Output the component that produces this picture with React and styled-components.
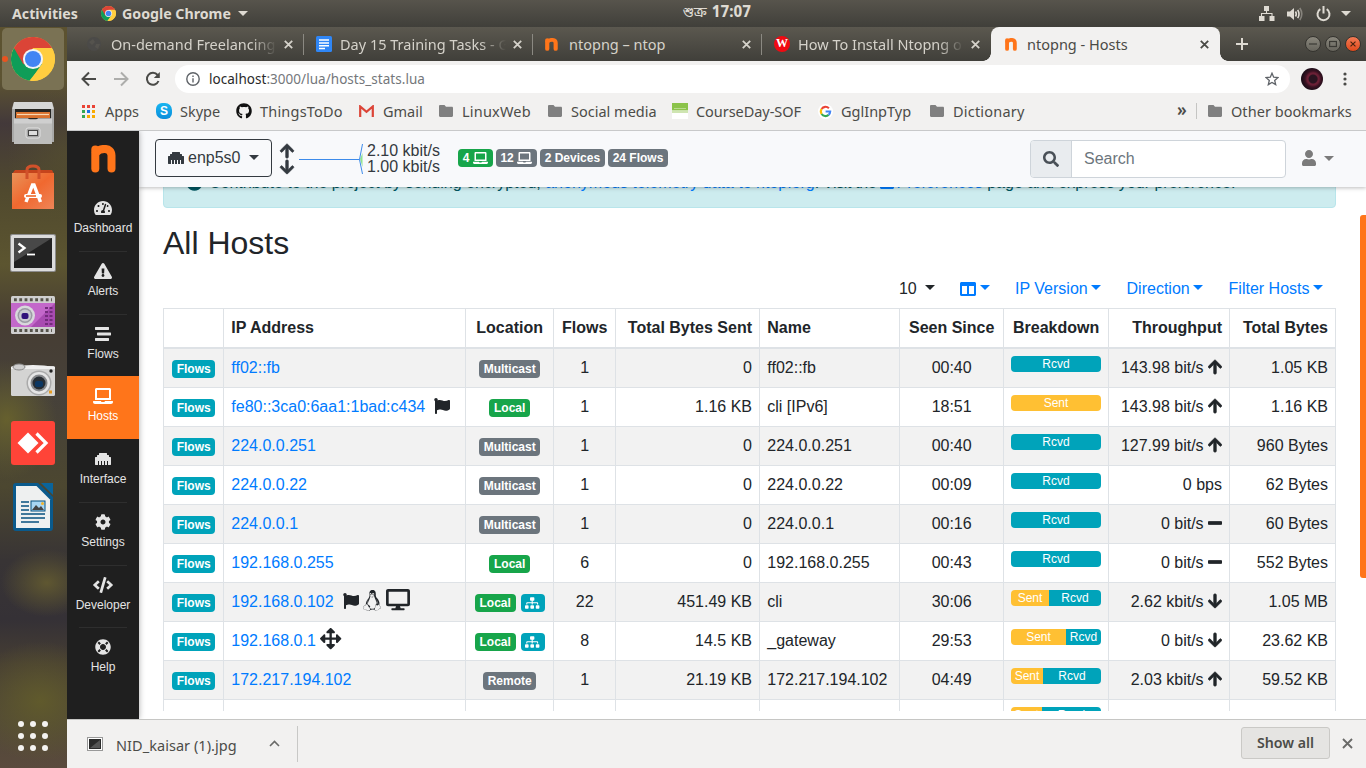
import React from "react";
import styled, { createGlobalStyle, css } from "styled-components";
import {
  FaTachometerAlt, FaExclamationTriangle, FaStream, FaLaptop, FaEthernet, FaCog, FaCode, FaLifeRing,
  FaSitemap, FaFlag, FaDesktop, FaArrowsAlt, FaArrowUp, FaArrowDown, FaMinus, FaSearch, FaUser,
  FaColumns, FaLinux, FaInfoCircle, FaGithub, FaSquare,
} from "react-icons/fa";

const UI = `"Noto Sans", "Open Sans", sans-serif`;
const WEB = `"Liberation Sans", Arial, sans-serif`;

const Global = createGlobalStyle`
  *, *::before, *::after { box-sizing: border-box; }
  html, body { margin: 0; padding: 0; }
  body { width: 1366px; height: 768px; overflow: hidden; }
  svg { display: block; flex: none; }
`;

const Desktop = styled.div`
  width: 1366px; height: 768px; display: grid; overflow: hidden;
  grid-template: 27px 741px / 67px 1299px;
  font-family: ${UI};
`;

/* ---------- GNOME top bar ---------- */
const TopBar = styled.header`
  grid-column: 1 / 3; display: grid; grid-template-columns: minmax(0, 1fr) 136px minmax(0, 1fr); align-items: center;
  background: linear-gradient(#57544c, #403f3a); color: #dedad2;
  font-size: 14.2px; font-weight: 700; line-height: 27px; white-space: nowrap;
`;
const TopGroup = styled.div`
  display: flex; align-items: center; height: 27px; padding: ${(p) => p.$pad};
  justify-content: ${(p) => p.$justify || "flex-start"};
`;
const TopLabel = styled.span`
  width: ${(p) => p.$w}px; margin: 0 ${(p) => p.$gap || 0}px 0 ${(p) => p.$left || 0}px;
`;
const Clock = styled.span`
  padding-left: 67.500px; line-height: 27px; height: 27px; font-family: "Noto Sans Bengali", "Liberation Sans", sans-serif; font-size: 15px;
`;
const Weekday = styled.span`font-weight: 400; margin-right: 1px;`;
const Triangle = styled.i`
  width: 0; height: 0; border: 5px solid transparent; border-top-color: currentColor; border-bottom: 0;
`;

/* ---------- Dock ---------- */
const Dock = styled.nav`
  display: flex; flex-direction: column; align-items: center; padding: 1px 2px 0 0; height: 741px;
  background:
    radial-gradient(ellipse 60px 70px at 100% 17%, #57512e99, transparent),
    radial-gradient(ellipse 50px 60px at 10% 53%, #66602e, transparent),
    radial-gradient(ellipse 46px 34px at 70% 75%, #5f5731, transparent),
    radial-gradient(ellipse 70px 60px at 60% 91%, #605a2c, transparent),
    linear-gradient(#5c5230 0, #5d5432 7%, #43393a 13%, #50492e 22%, #5c5530 32%, #463d33 40%, #46413a 50%, #4c4730 62%, #383435 72%, #353136 80%, #463e33 86%, #514838 94%, #5a4a3d 100%);
`;
const DockItem = styled.div`
  width: 62px; height: 62px; margin-bottom: 2px; border-radius: 5px; position: relative;
  display: flex; align-items: center; justify-content: center; flex: none;
  padding-top: ${(p) => p.$drop || 0}px;
  background: ${(p) => (p.$active ? "#7a7254" : "transparent")};
  &:last-child { margin: auto 0 1px; }
`;
const RunDot = styled.i`
  position: absolute; left: 0; top: 28px; width: 6px; height: 6px; border-radius: 50%; background: #e95420;
`;

/* ---------- Browser ---------- */
const Browser = styled.main`
  display: grid; grid-template-rows: 34px 35px 35px 588px 49px; width: 1299px; height: 741px; min-width: 0;
`;
const TabStrip = styled.div`
  display: flex; padding-left: 8px; background: linear-gradient(#5b584f, #403f3a); height: 34px;
`;
const TabBox = styled.div`
  width: 229px; height: 34px; display: flex; align-items: center; padding: 0 11px 0 12px; position: relative;
  color: ${(p) => (p.$active ? "#4a4a46" : "#d5d2ca")};
  ${(p) => p.$active ? css`
    background: #f2f1f0; border-radius: 8px 8px 0 0; padding-left: 14px;
    &::before, &::after { content: ""; position: absolute; bottom: 0; width: 8px; height: 8px; }
    &::before { left: -8px; background: radial-gradient(circle at 0 0, transparent 7.5px, #f2f1f0 8px); }
    &::after { right: -8px; background: radial-gradient(circle at 100% 0, transparent 7.5px, #f2f1f0 8px); }
  ` : p.$sep && css`
    &::after { content: ""; position: absolute; right: 0; top: 7px; width: 1px; height: 21px; background: #8b8982; }
  `}
`;
const TabIcon = styled.span`width: ${(p) => (p.$active ? 22 : 24)}px; height: 16px; display: flex; align-items: center;`;
const TabTitle = styled.span`
  width: 170px; white-space: nowrap; font-size: 14.5px; line-height: 22px; margin-top: -1px;
  ${(p) => p.$fade && css`mask-image: linear-gradient(90deg, #000 140px, transparent 166px);`}
`;
const TabClose = styled.span`margin-left: auto;`;
const StripEnd = styled.div`
  flex: 1; display: flex; align-items: center; padding: 0 5px 0 16px; gap: 4px; color: #dedad2;
  & > :nth-child(2) { margin-left: auto; }
`;
const WinBtn = styled.span`
  width: 16px; height: 16px; border-radius: 50%; display: grid; place-items: center; border: 1px solid #35342f;
  background: ${(p) => (p.$close ? "linear-gradient(#f37b55, #df4a1c)" : "linear-gradient(#8a877d, #66645c)")};
`;

const Toolbar = styled.div`
  background: #f2f1f0; display: flex; align-items: center; padding: 1px 16px 0 14px; color: #4c4c48;
`;
const NavIcon = styled.span`width: 16px; margin-right: 16px;`;
const UrlPill = styled.div`
  width: 1115px; height: 28px; border-radius: 14px; background: #fff; margin-left: -2px;
  display: flex; align-items: center; padding: 0 11px 0 11px; color: #5f6368;
`;
const Url = styled.span`
  flex: 1; margin-left: 9px; font-size: 13.5px; color: #74777b; letter-spacing: 0.04px; line-height: 20px;
  b { font-weight: 400; color: #2a2a2a; }
`;
const Avatar = styled.span`
  width: 22px; height: 22px; margin: 0 20px 0 11px; border-radius: 50%;
  background: radial-gradient(circle at 55% 50%, #2a1420 0 4px, #6b2036 5px 6px, #3a1222 8px, #1d0d18 11px);
`;

const Bookmarks = styled.div`
  background: #f2f1f0; border-bottom: 1px solid #c8c9ca; display: flex; align-items: center; padding: 0 14px 4px 15px;
  color: #4c4c48; height: 35px;
`;
const Bookmark = styled.div`
  display: flex; align-items: center; width: ${(p) => p.$w}px; flex: none; white-space: nowrap;
  font-size: 14.5px; line-height: 20px;
`;
const BookmarkLabel = styled.span`margin-top: -1px; letter-spacing: ${(p) => p.$ls || 0}px;`;
const BookmarkIcon = styled.span`width: ${(p) => p.$w || 24}px; display: flex; align-items: center;`;
const More = styled.span`margin: -2px 0 0 auto; width: 19px; font-size: 17px; font-weight: 600; line-height: 20px;`;
const BarSep = styled.i`width: 1px; height: 16px; background: #c5c5c3; margin-right: 11px;`;

/* ---------- Web page ---------- */
const Page = styled.section`
  display: grid; grid-template-columns: 72px 1fr; height: 588px; background: #fff; font-family: ${WEB};
  font-size: 16px; line-height: 24px; color: #212529; overflow: hidden; position: relative;
`;
const Sidebar = styled.aside`
  background: #1f1f1f; box-shadow: 0 0 6px #0005; display: flex; flex-direction: column; position: relative; z-index: 3;
`;
const Brand = styled.div`height: 57px; display: flex; justify-content: center; padding-top: 14px; flex: none;`;
const SideItem = styled.div`
  height: 62.75px; flex: none; display: flex; flex-direction: column; align-items: center; padding-top: 12px; position: relative;
  font-size: 12px; line-height: 18px; color: ${(p) => (p.$active ? "#fff" : "#e4e4e4")};
  background: ${(p) => (p.$active ? "#ff751a" : "transparent")};
  svg { height: 16px; width: 20px; margin-bottom: 3px; }
  & + &::before { content: ""; position: absolute; top: 0; left: 12px; right: 12px; height: 1px; background: ${(p) => (p.$active ? "transparent" : "#2e2e2e")}; }
`;
const Content = styled.div`display: flex; flex-direction: column; min-width: 0;`;
const Navbar = styled.div`
  height: 56px; flex: none; background: #f8f9fb; box-shadow: 0 1px 4px #0004; position: relative; z-index: 2;
  display: flex; align-items: center; padding: 0 31px 0 16px;
`;
const IfaceButton = styled.button`
  height: 38px; width: 117px; border: 1px solid #343a40; border-radius: 4px; background: transparent; color: #343a40;
  font: 16px/24px ${WEB}; display: flex; align-items: center; padding: 0 12px; margin: -3px 8px 0 0;
  svg { margin-right: 4px; }
`;
const Caret = styled.i`
  width: 0; height: 0; border: 5px solid transparent; border-top-color: currentColor; border-bottom: 0;
  display: inline-block; margin-left: ${(p) => p.$gap ?? 3.5}px;
`;
const Arrows = styled.div`display: flex; flex-direction: column; width: 19px; color: #343a40; margin: -1px 1px 0 -1px;`;
const Rates = styled.div`line-height: 16px; width: 91px; color: #343a40; margin: -1px 0 0 4px;`;
const Badge = styled.span`
  display: inline-block; padding: 3px 4.8px; border-radius: 4px; font-size: 12px; font-weight: 700; line-height: 12px; color: #fff;
  background: ${(p) => ({ green: "#17a54a", teal: "#00a3ba", grey: "#6c757d" })[p.$tone]};
  white-space: nowrap; vertical-align: baseline; height: 18px;
  svg { display: inline-block; width: 15px; height: 12px; vertical-align: top; }
`;
const NavBadges = styled.div`display: flex; gap: 3px; margin-top: -2px;`;
const SearchGroup = styled.div`
  margin: 0 16px 0 auto; width: 256px; height: 38px; border: 1px solid #ced4da; border-radius: 4px; background: #fff;
  display: flex; align-items: center; overflow: hidden; color: #6c757d;
`;
const SearchAddon = styled.span`
  width: 41px; height: 36px; background: #e9ecef; border-right: 1px solid #ced4da; display: grid; place-items: center;
  color: #495057; margin-right: 12px;
`;
const UserMenu = styled.div`
  display: flex; align-items: center; color: #7b7b7b; margin-top: -2px; width: 33px;
  svg { margin-left: -1px; }
`;

const Scroll = styled.div`height: 524px; overflow: hidden; padding: 0 30px 0 24px; flex: none;`;
const Alert = styled.div`
  height: 50px; margin-top: -29px; padding: 12px 20px; border: 1px solid #b8e5eb; border-radius: 4px;
  background: #cdecef; color: #00555f; white-space: nowrap; display: flex;
  svg { display: inline-block; vertical-align: -2px; width: 14px; margin-right: 2px; }
  & > svg { width: 17px; margin: 3px 6px 0 2px; }
  a { color: #007bff; }
`;
const Sentence = styled.span`letter-spacing: ${(p) => p.$ls || 0}px;`;
const Title = styled.h2`font-size: 32px; line-height: 38px; font-weight: 400; margin: 16px 0 15px; height: 38px;`;
const Controls = styled.div`
  display: flex; justify-content: flex-end; height: 24px; margin-bottom: 7px; padding-right: 13px; color: #007bff;
`;
const Control = styled.span`
  display: flex; align-items: center; margin-left: 25.4px; color: ${(p) => (p.$dark ? "#212529" : "inherit")};
  i { margin-top: -3px; }
`;
const Table = styled.table`
  border-collapse: separate; border-spacing: 0; table-layout: fixed; width: 1173px; border-left: 1px solid #dee2e6;
  border-top: 1px solid #dee2e6;
  tbody tr:nth-child(odd) { background: #f2f2f2; }
`;
const cell = css`
  padding: 7px 7px 7px 7.3px; border-right: 1px solid #dee2e6; height: 39px; white-space: nowrap;
  text-align: ${(p) => p.$align || "left"}; vertical-align: top; line-height: 24px;
`;
const Th = styled.th`${cell} border-bottom: 2px solid #dee2e6; height: 40px; font-weight: 700;`;
const Td = styled.td`
  ${cell} border-bottom: 1px solid #dee2e6;
  ${(p) => p.$bar && css`padding-left: 7px;`}
  a { color: #007bff; }
`;
const Bar = styled.div`
  display: flex; height: 16px; border-radius: 4px; overflow: hidden; font-size: 12px; line-height: 16px; text-align: center; color: #fff;
`;
const BarPart = styled.span`flex: none; overflow: hidden; background: ${(p) => (p.$sent ? "#ffc033" : "#00a3ba")};`;
const Extras = styled.span`
  display: inline-flex; align-items: center; height: ${(p) => p.$h || 23}px; vertical-align: top;
  svg { margin-left: ${(p) => p.$gap || 0}px; width: ${(p) => p.$w}px; }
`;
const LocationBadges = styled.span`
  display: inline-flex; gap: 5px; vertical-align: top; margin-top: 4px;
  svg { width: 14.4px; }
`;
const ScrollThumb = styled.i`
  position: absolute; right: 0; top: 84px; width: 6px; height: 363px; border-radius: 3px 0 0 3px; background: #ff751a; z-index: 4;
`;

/* ---------- Download shelf ---------- */
const Shelf = styled.footer`
  border-top: 1px solid #c6c6c4; background: #f2f1f0; display: flex; align-items: center; padding: 0 13px 1px 20px;
  color: #4c4c48; font-size: 14.5px;
`;
const FileName = styled.span`width: 153px; margin-left: 13px; padding-top: 3px; white-space: nowrap; letter-spacing: 0.05px;`;
const ShelfSep = styled.i`width: 1px; height: 36px; background: #c8c8c6; margin-left: 17px;`;
const ShowAll = styled.button`
  margin: 0 12px 1px auto; width: 89px; height: 32px; border: 1px solid #cac9c6; border-radius: 3px; background: #e5e4e2;
  font: 600 14.2px/20px ${UI}; color: #4c4c48; padding: 0;
`;

/* ---------- Drawings ---------- */
const ChromeLogo = ({ size }) => (
  <svg width={size} height={size} viewBox="0 0 48 48">
    <circle cx="24" cy="24" r="24" fill="#ffcd40" />
    <path d="M24 24 3.2 12A24 24 0 0 0 20 47.7L34.4 30z" fill="#0f9d58" />
    <path d="M3.2 12A24 24 0 0 1 44.8 12H24L13.6 30z" fill="#db4437" />
    <path d="M24 13h21.3A24 24 0 0 1 21 47.8L34 29z" fill="#ffcd40" />
    <circle cx="24" cy="24" r="11" fill="#f4f4f4" />
    <circle cx="24" cy="24" r="8.8" fill="#4285f4" />
  </svg>
);
const NLogo = ({ w, h }) => (
  <svg width={w} height={h} viewBox="0 0 25 28" preserveAspectRatio="none" fill="none" stroke="#ff751a" strokeLinecap="round" strokeLinejoin="round">
    <path d="M4.300 4.400V23.600" strokeWidth="8" />
    <path d="M5 7.500C9 3 20.500 1.500 20.500 10.500V23.600" strokeWidth="8" />
  </svg>
);
const Cross = ({ size = 9, w = 1.8, color = "currentColor" }) => (
  <svg width={size} height={size} viewBox="0 0 9 9" stroke={color} strokeWidth={w}><path d="M.8.8l7.4 7.4M8.2.8L.8 8.2" /></svg>
);
const Folder = () => (
  <svg width="14" height="12" viewBox="0 0 14 12" fill="#808080"><path d="M1.2 0h4.3L7 1.8h5.8c.7 0 1.2.5 1.2 1.1v7.9c0 .7-.5 1.2-1.2 1.2H1.2C.5 12 0 11.500 0 10.800V1.200C0 .5.5 0 1.200 0z" /></svg>
);
const DocIcon = () => (
  <svg width="16" height="16" viewBox="0 0 16 16"><rect width="16" height="16" rx="1.5" fill="#2f86f6" />
    <path d="M3 4h10M3 7h10M3 9.800h10M3 12.500h6" stroke="#fff" strokeWidth="1.500" /></svg>
);
const WBadge = styled.span`
  width: 16px; height: 16px; border-radius: 50%; background: #f00a12; color: #fff; font: 700 12px/15px "Liberation Serif", serif; text-align: center;
`;
const DimGlobe = () => (
  <svg width="14" height="14" viewBox="0 0 14 14"><circle cx="7" cy="7" r="7" fill="#4b4a48" /><path d="M2 5l4-3 2 3-3 3zM9 7l4 0-2 5-3-2z" fill="#55534e" /></svg>
);
const AppsGrid = () => (
  <svg width="13" height="13" viewBox="0 0 13 13">
    {["#ea4335", "#ea4335", "#ea4335", "#34a853", "#1a73e8", "#f9ab00", "#34a853", "#f9ab00", "#f9ab00"].map((c, i) => (
      <rect key={i} x={(i % 3) * 5} y={Math.floor(i / 3) * 5} width="3" height="3" fill={c} />
    ))}
  </svg>
);
const SkypeMark = styled.span`
  width: 16px; height: 16px; border-radius: 6px 7px 6px 7px; background: linear-gradient(#19b5f0, #0a8ddb);
  color: #fff; font: 700 12px/16px ${WEB}; text-align: center;
`;
const GmailIcon = () => (
  <svg width="15" height="12" viewBox="0 0 15 12"><rect x="1" y=".5" width="13" height="11" fill="#efefef" /><path d="M1.200 12V1.500l6.300 5.300 6.300-5.300V12" fill="none" stroke="#dc4437" strokeWidth="2.200" /></svg>
);
const GreenSheet = () => (
  <svg width="16" height="16" viewBox="0 0 16 16"><rect width="16" height="16" fill="#fff" /><rect width="16" height="7.500" fill="#8bc34a" /><rect y="7.500" width="16" height="2.500" fill="#cfe5b2" /><path d="M2 5.500h12" stroke="#b9db8f" /></svg>
);
const GoogleG = () => (
  <svg width="15" height="15" viewBox="0 0 15 15"><circle cx="7.500" cy="7.500" r="7.500" fill="#fff" />
    <g fill="none" strokeWidth="2.100"><path d="M3.600 5A4.700 4.700 0 0 1 10.900 4.200" stroke="#ea4335" /><path d="M3.600 5a4.700 4.700 0 0 0 0 5" stroke="#fbbc05" />
      <path d="M3.600 10a4.700 4.700 0 0 0 7 .9" stroke="#34a853" /><path d="M10.600 10.900a4.700 4.700 0 0 0 1.600-3.400H7.600" stroke="#4285f4" /></g></svg>
);
const FilesIcon = () => (
  <svg width="44" height="44" viewBox="0 0 44 44">
    <path d="M3 1h38l2 6v34H1V7z" fill="#a9a9a8" /><path d="M3 1h38l1.500 7h-41z" fill="#d6d6d6" />
    <path d="M4 8h36v10H4z" fill="#262522" /><path d="M5 11h34v6H5z" fill="#d9722e" /><path d="M6 13.500h32" stroke="#f7d8b4" strokeWidth="1.200" />
    <path d="M3 17.500h14l2 1.500h6l2-1.500h14V43H3z" fill="#bdbdbc" /><path d="M3 17.500h14l2 1.500h6l2-1.500h14v5H3z" fill="#cfcfcf" />
    <rect x="15" y="27" width="14" height="10" rx="2" fill="#a6a6a6" stroke="#e2e2e2" /><rect x="17.500" y="29.500" width="9" height="5" fill="#ddd" stroke="#444" />
  </svg>
);
const SoftwareIcon = () => (
  <svg width="44" height="46" viewBox="0 0 44 46">
    <defs><linearGradient id="bag" x1="0" y1="0" x2="1" y2="1"><stop offset="0" stopColor="#e8935a" /><stop offset=".5" stopColor="#f0682f" /><stop offset="1" stopColor="#ee8558" /></linearGradient></defs>
    <path d="M1 10l3-4h37l2 4z" fill="#c5441c" /><rect x="1" y="9" width="42" height="36" fill="url(#bag)" />
    <path d="M16 15V6q0-4 6-4t6 4v9" fill="none" stroke="#d1512a" strokeWidth="3" />
    <path d="M15 38l6.500-17h1.500l6.500 17" fill="none" stroke="#fff" strokeWidth="3.400" /><rect x="13" y="30" width="18" height="4" rx="2" fill="#fff" /><rect x="15" y="31.200" width="10" height="1.600" fill="#ee6a2c" />
  </svg>
);
const TerminalIcon = () => (
  <svg width="46" height="38" viewBox="0 0 46 38">
    <rect width="46" height="38" rx="2" fill="#8c8c8c" /><rect x="1" y="1" width="44" height="36" rx="1.500" fill="#dcdcdc" /><rect x="4" y="4" width="38" height="30" fill="#222" /><path d="M4 4h38L4 28z" fill="#484848" />
    <path d="M8.500 9.500l6 4.500-6 4.500" fill="none" stroke="#fff" strokeWidth="2.300" /><path d="M17 20.500h8" stroke="#fff" strokeWidth="1.800" />
  </svg>
);
const RecorderIcon = () => (
  <svg width="44" height="38" viewBox="0 0 44 38">
    <rect width="44" height="38" rx="1.500" fill="#cfcfcf" /><rect y="7" width="44" height="24" fill="#a84bb1" /><path d="M0 7h44L20 31H0z" fill="#c368ca" />
    <path d="M3 3.700h38M3 34.500h38" stroke="#55534a" strokeWidth="3" strokeDasharray="2.800 2.500" />
    <path d="M35.500 11v18M40 11v18" stroke="#742b7d" strokeWidth="3" strokeDasharray="2 2" />
    <circle cx="14" cy="19.500" r="10" fill="#d8d8dc" /><circle cx="14" cy="19.500" r="7.500" fill="#9b9ba4" /><circle cx="14" cy="19.500" r="6" fill="#cacad0" /><rect x="10.500" y="17" width="7" height="6" rx="2" fill="#31127b" />
  </svg>
);
const CameraIcon = () => (
  <svg width="44" height="33" viewBox="0 0 44 33">
    <rect y="3" width="44" height="30" rx="1.500" fill="#d4d4d3" /><path d="M0 4q22-4 44 0v2H0z" fill="#efefef" /><ellipse cx="8" cy="4" rx="6" ry="3" fill="#cfcfcf" stroke="#8a8a8a" />
    <circle cx="28" cy="20" r="12.500" fill="#aaa" /><circle cx="28" cy="20" r="11" fill="#e6e6e6" /><circle cx="28" cy="20" r="8.500" fill="#87898c" /><circle cx="28" cy="20" r="6.500" fill="#272d33" /><rect x="24" y="18" width="8" height="6" rx="2" fill="#0c3763" />
    <circle cx="40" cy="8" r="1.700" fill="#222" /><rect x="38" y="27.500" width="3" height="3" fill="#e79b21" />
  </svg>
);
const AnyDeskIcon = () => (
  <svg width="44" height="44" viewBox="0 0 44 44"><rect width="44" height="44" rx="3" fill="#ff4438" /><path d="M17 11.500l10.500 10.500L17 32.500 6.500 22z" fill="#fff" /><path d="M25.500 12.500l9.500 9.500-9.500 9.500" fill="none" stroke="#fff" strokeWidth="3.200" /></svg>
);
const WriterIcon = () => (
  <svg width="40" height="48" viewBox="0 0 40 48">
    <path d="M3 0h22l15 14v31a3 3 0 0 1-3 3H3a3 3 0 0 1-3-3V3a3 3 0 0 1 3-3z" fill="#0a5a8c" /><path d="M28 0h12v12z" fill="#0a649b" />
    <path d="M3 3h20.500L37 16.500V45H3z" fill="#eef0f0" />
    <path d="M8 19h8M8 23h8M8 27h8M8 31h24M8 35h24M8 39h18" stroke="#07507f" strokeWidth="1.700" />
    <rect x="18" y="18" width="14" height="10" fill="#a8d6f3" stroke="#07507f" /><path d="M19 27l4-5 3 3 2-2 3 4z" fill="#444" /><circle cx="29.500" cy="20.500" r="1.500" fill="#f3b32b" />
  </svg>
);
const DotGrid = () => (
  <svg width="30" height="30" viewBox="0 0 30 30" fill="#f4f3f0">
    {[0, 1, 2, 3, 4, 5, 6, 7, 8].map((i) => <circle key={i} cx={3 + (i % 3) * 12} cy={3 + Math.floor(i / 3) * 12} r="3" />)}
  </svg>
);
const NetIcon = () => (
  <svg width="16" height="15" viewBox="0 0 16 15" fill="currentColor"><rect x="5" width="5" height="5" /><rect y="10" width="5.500" height="5" /><rect x="10.500" y="10" width="5" height="5" /><path d="M7.500 4v4M2.500 10V7.500H13V10" fill="none" stroke="currentColor" strokeWidth="1.100" /></svg>
);
const SoundIcon = () => (
  <svg width="16" height="14" viewBox="0 0 16 14" fill="none" stroke="currentColor" strokeWidth="1.600"><path d="M0 4.500h3L7 1v12L3 9.500H0z" fill="currentColor" stroke="none" /><path d="M8.500 4.500q1.600 2.500 0 5M10.700 2.800q2.600 4.200 0 8.400" /><path d="M12.800 1q4 6 0 12" opacity=".4" /></svg>
);
const PowerIcon = () => (
  <svg width="15" height="16" viewBox="0 0 15 16" fill="none" stroke="currentColor" strokeWidth="2"><path d="M4.300 3.200a6 6 0 1 0 6.400 0M7.500 0v7.500" /></svg>
);

const tabs = [
  { icon: <DimGlobe />, title: "On-demand Freelancing", fade: true, sep: true },
  { icon: <DocIcon />, title: "Day 15 Training Tasks - G", fade: true, sep: true },
  { icon: <NLogo w={13} h={13} />, title: "ntopng – ntop", sep: true },
  { icon: <WBadge>W</WBadge>, title: "How To Install Ntopng o", fade: true },
  { icon: <NLogo w={12} h={13} />, title: "ntopng - Hosts", active: true },
];
const bookmarks = [
  { icon: <AppsGrid />, label: "Apps", w: 74, iw: 23 },
  { icon: <SkypeMark>S</SkypeMark>, label: "Skype", w: 80 },
  { icon: <FaGithub size={16} color="#111" />, label: "ThingsToDo", w: 123, ls: 0.2 },
  { icon: <GmailIcon />, label: "Gmail", w: 80 },
  { icon: <Folder />, label: "LinuxWeb", w: 109, iw: 23, ls: 0.2 },
  { icon: <Folder />, label: "Social media", w: 124, iw: 23 },
  { icon: <GreenSheet />, label: "CourseDay-SOF", w: 146, ls: -0.05 },
  { icon: <GoogleG />, label: "GglInpTyp", w: 112, iw: 23 },
  { icon: <Folder />, label: "Dictionary", w: 110, iw: 23, ls: 0.2 },
];
const menu = [
  [FaTachometerAlt, "Dashboard"], [FaExclamationTriangle, "Alerts"], [FaStream, "Flows"], [FaLaptop, "Hosts"],
  [FaEthernet, "Interface"], [FaCog, "Settings"], [FaCode, "Developer"], [FaLifeRing, "Help"],
];
const columns = [
  ["", 60, "center"], ["IP Address", 242, "left"], ["Location", 88, "center"], ["Flows", 62, "center"],
  ["Total Bytes Sent", 144, "right"], ["Name", 140, "left"], ["Seen Since", 104, "center"],
  ["Breakdown", 105, "center"], ["Throughput", 121, "right"], ["Total Bytes", 106, "right"],
];
const hosts = [
  { ip: "ff02::fb", loc: "Multicast", flows: 1, sent: "0", name: "ff02::fb", seen: "00:40", ratio: 0, thpt: "143.98 bit/s", dir: "up", total: "1.05 KB" },
  { ip: "fe80::3ca0:6aa1:1bad:c434", extra: "flag", loc: "Local", flows: 1, sent: "1.16 KB", name: "cli [IPv6]", seen: "18:51", ratio: 90, thpt: "143.98 bit/s", dir: "up", total: "1.16 KB" },
  { ip: "224.0.0.251", loc: "Multicast", flows: 1, sent: "0", name: "224.0.0.251", seen: "00:40", ratio: 0, thpt: "127.99 bit/s", dir: "up", total: "960 Bytes" },
  { ip: "224.0.0.22", loc: "Multicast", flows: 1, sent: "0", name: "224.0.0.22", seen: "00:09", ratio: 0, thpt: "0 bps", total: "62 Bytes" },
  { ip: "224.0.0.1", loc: "Multicast", flows: 1, sent: "0", name: "224.0.0.1", seen: "00:16", ratio: 0, thpt: "0 bit/s", dir: "flat", total: "60 Bytes" },
  { ip: "192.168.0.255", loc: "Local", flows: 6, sent: "0", name: "192.168.0.255", seen: "00:43", ratio: 0, thpt: "0 bit/s", dir: "flat", total: "552 Bytes" },
  { ip: "192.168.0.102", extra: "pc", loc: "Local", map: true, flows: 22, sent: "451.49 KB", name: "cli", seen: "30:06", ratio: 38, thpt: "2.62 kbit/s", dir: "down", total: "1.05 MB" },
  { ip: "192.168.0.1", extra: "move", loc: "Local", map: true, flows: 8, sent: "14.5 KB", name: "_gateway", seen: "29:53", ratio: 55, thpt: "0 bit/s", dir: "down", total: "23.62 KB" },
  { ip: "172.217.194.102", loc: "Remote", flows: 1, sent: "21.19 KB", name: "172.217.194.102", seen: "04:49", ratio: 32, thpt: "2.03 kbit/s", dir: "up", total: "59.52 KB" },
];
const dirIcons = { up: FaArrowUp, down: FaArrowDown, flat: FaMinus };

const Breakdown = ({ ratio }) => (
  <Bar>
    {ratio > 0 && <BarPart $sent style={{ width: ratio }}>Sent</BarPart>}
    {ratio < 90 && <BarPart style={{ width: 90 - ratio }}>Rcvd</BarPart>}
  </Bar>
);
const HostExtras = ({ kind }) => {
  if (kind === "flag") return <Extras $gap={9} $w={16} $h={22}><FaFlag size={16} /></Extras>;
  if (kind === "pc") return (
    <>
      <Extras $gap={9} $w={16} $h={22}><FaFlag size={16} /></Extras>
      <Extras $gap={4} $w={18.5} $h={20}><FaLinux size={21} /></Extras>
      <Extras $gap={5} $w={24} $h={20}><FaDesktop size={21.3} /></Extras>
    </>
  );
  if (kind === "move") return <Extras $gap={4.4} $w={21.3} $h={20}><FaArrowsAlt size={21.3} /></Extras>;
  return null;
};
const HostRow = ({ h }) => {
  const Dir = dirIcons[h.dir];
  return (
    <tr>
      <Td $align="center"><Badge $tone="teal">Flows</Badge></Td>
      <Td><a>{h.ip}</a><HostExtras kind={h.extra} /></Td>
      <Td $align="center">
        {h.map ? (
          <LocationBadges><Badge $tone="green">Local</Badge><Badge $tone="teal"><FaSitemap /></Badge></LocationBadges>
        ) : <Badge $tone={h.loc === "Local" ? "green" : "grey"}>{h.loc}</Badge>}
      </Td>
      <Td $align="center">{h.flows}</Td>
      <Td $align="right">{h.sent}</Td>
      <Td>{h.name}</Td>
      <Td $align="center">{h.seen}</Td>
      <Td $bar><Breakdown ratio={h.ratio} /></Td>
      <Td $align="right">{h.thpt}{Dir && <Extras $gap={4.4} $w={14} $h={22}><Dir size={16} strokeWidth={24} stroke="currentColor" /></Extras>}</Td>
      <Td $align="right">{h.total}</Td>
    </tr>
  );
};

export default function App() {
  return (
    <Desktop>
      <Global />
      <TopBar>
        <TopGroup $pad="0 0 0 12px">
          <TopLabel $w={68} $gap={21}>Activities</TopLabel>
          <ChromeLogo size={15} />
          <TopLabel $w={110} $gap={6} $left={6}>Google Chrome</TopLabel>
          <Triangle />
        </TopGroup>
        <Clock><Weekday>শুক্র</Weekday> 17:07</Clock>
        <TopGroup $justify="flex-end" $pad="0 15px 0 0">
          <NetIcon /><TopLabel $w={12} /><SoundIcon /><TopLabel $w={13} /><PowerIcon /><TopLabel $w={10} /><Triangle />
        </TopGroup>
      </TopBar>

      <Dock>
        <DockItem $active><RunDot /><ChromeLogo size={44} /></DockItem>
        <DockItem><FilesIcon /></DockItem>
        <DockItem><SoftwareIcon /></DockItem>
        <DockItem $drop={3}><TerminalIcon /></DockItem>
        <DockItem><RecorderIcon /></DockItem>
        <DockItem $drop={1}><CameraIcon /></DockItem>
        <DockItem><AnyDeskIcon /></DockItem>
        <DockItem><WriterIcon /></DockItem>
        <DockItem><DotGrid /></DockItem>
      </Dock>

      <Browser>
        <TabStrip>
          {tabs.map((t) => (
            <TabBox key={t.title} $active={t.active} $sep={t.sep}>
              <TabIcon $active={t.active}>{t.icon}</TabIcon>
              <TabTitle $fade={t.fade}>{t.title}</TabTitle>
              <TabClose><Cross /></TabClose>
            </TabBox>
          ))}
          <StripEnd>
            <svg width="12" height="12" viewBox="0 0 12 12" stroke="currentColor" strokeWidth="2"><path d="M6 0v12M0 6h12" /></svg>
            <WinBtn><svg width="8" height="8" stroke="#3a3934" strokeWidth="1.2"><path d="M0 4h8" /></svg></WinBtn>
            <WinBtn><svg width="8" height="8" fill="none" stroke="#3a3934" strokeWidth="1.2"><rect x=".6" y="1.500" width="6.800" height="5" /></svg></WinBtn>
            <WinBtn $close><Cross size={6} w={1.7} color="#45220f" /></WinBtn>
          </StripEnd>
        </TabStrip>

        <Toolbar>
          <NavIcon><svg width="16" height="16" viewBox="0 0 16 16" fill="none" stroke="#4a4a47" strokeWidth="2"><path d="M15 8H2M8 1.500L1.500 8 8 14.500" /></svg></NavIcon>
          <NavIcon><svg width="16" height="16" viewBox="0 0 16 16" fill="none" stroke="#adadab" strokeWidth="2"><path d="M1 8h13M8 1.500L14.500 8 8 14.500" /></svg></NavIcon>
          <NavIcon><svg width="16" height="16" viewBox="0 0 16 16" fill="none" stroke="#4a4a47" strokeWidth="2"><path d="M13.500 10A6 6 0 1 1 12.600 4" /><path d="M14.800 1v6H8.800z" fill="#4a4a47" stroke="none" /></svg></NavIcon>
          <UrlPill>
            <svg width="14" height="14" viewBox="0 0 14 14" fill="none" stroke="#5f6368" strokeWidth="1.400"><circle cx="7" cy="7" r="6.200" /><path d="M7 6.200v4.200M7 3.400v1.500" /></svg>
            <Url><b>localhost</b>:3000/lua/hosts_stats.lua</Url>
            <svg width="14" height="14" viewBox="0 0 14 14" fill="none" stroke="#5f6368" strokeWidth="1.300"><path d="M7 1.200l1.700 4 4.300.4-3.300 2.800 1 4.200L7 10.400l-3.700 2.200 1-4.200L1 5.600l4.300-.4z" /></svg>
          </UrlPill>
          <Avatar />
          <svg width="4" height="14" viewBox="0 0 4 14" fill="#4a4a47"><circle cx="2" cy="2" r="1.600" /><circle cx="2" cy="7" r="1.600" /><circle cx="2" cy="12" r="1.600" /></svg>
        </Toolbar>

        <Bookmarks>
          {bookmarks.map((b) => (
            <Bookmark key={b.label} $w={b.w}><BookmarkIcon $w={b.iw}>{b.icon}</BookmarkIcon><BookmarkLabel $ls={b.ls}>{b.label}</BookmarkLabel></Bookmark>
          ))}
          <More>»</More>
          <BarSep />
          <Bookmark $w={144}><BookmarkIcon $w={23}><Folder /></BookmarkIcon><BookmarkLabel $ls={0.05}>Other bookmarks</BookmarkLabel></Bookmark>
        </Bookmarks>

        <Page>
          <Sidebar>
            <Brand><NLogo w={25} h={28} /></Brand>
            {menu.map(([Icon, label]) => (
              <SideItem key={label} $active={label === "Hosts"}><Icon />{label}</SideItem>
            ))}
          </Sidebar>
          <Content>
            <Navbar>
              <IfaceButton><FaEthernet size={16} />enp5s0<Caret $gap={8} /></IfaceButton>
              <Arrows>
                <FaArrowUp size={16} stroke="currentColor" strokeWidth={24} />
                <FaArrowDown size={16} stroke="currentColor" strokeWidth={24} />
              </Arrows>
              <svg width="64" height="32" viewBox="0 0 64 32" fill="none"><path d="M61 16l2.500-6v14z" fill="#8fe38f" /><path d="M0 16.500h60.500L63.500 1M60.500 16.500L63.500 31" stroke="#3d8bea" strokeWidth="1" /></svg>
              <Rates>2.10 kbit/s<br />1.00 kbit/s</Rates>
              <NavBadges>
                <Badge $tone="green">4 <FaLaptop /></Badge>
                <Badge $tone="grey">12 <FaLaptop /></Badge>
                <Badge $tone="grey">2 Devices</Badge>
                <Badge $tone="grey">24 Flows</Badge>
              </NavBadges>
              <SearchGroup><SearchAddon><FaSearch size={16} /></SearchAddon>Search</SearchGroup>
              <UserMenu><FaUser size={16} /><Caret $gap={7} /></UserMenu>
            </Navbar>
            <Scroll>
              <Alert>
                <FaInfoCircle size={17} />
                <Sentence>
                  Contribute to the project by sending encrypted, <a>anonymous telemetry data to ntop.org</a>
                  <Sentence $ls={-0.35}>. Visit the </Sentence><a><FaSquare size={16} />Preferences</a> page and express your preference.
                </Sentence>
              </Alert>
              <Title>All Hosts</Title>
              <Controls>
                <Control $dark>10<Caret $gap={8} /></Control>
                <Control><FaColumns size={16} /><Caret /></Control>
                <Control>IP Version<Caret /></Control>
                <Control>Direction<Caret /></Control>
                <Control>Filter Hosts<Caret /></Control>
              </Controls>
              <Table>
                <colgroup>{columns.map(([c, w]) => <col key={c} style={{ width: w }} />)}</colgroup>
                <thead><tr>{columns.map(([c, , align]) => <Th key={c} $align={align}>{c}</Th>)}</tr></thead>
                <tbody>
                  {hosts.map((h) => <HostRow key={h.ip} h={h} />)}
                  <tr>{columns.map(([c]) => <Td key={c} $bar={c === "Breakdown"}>{c === "Breakdown" && <Breakdown ratio={31} />}</Td>)}</tr>
                </tbody>
              </Table>
            </Scroll>
          </Content>
          <ScrollThumb />
        </Page>

        <Shelf>
          <svg width="16" height="14" viewBox="0 0 16 14"><rect x=".5" y=".5" width="15" height="13" fill="#fff" stroke="#999" /><rect x="2" y="2" width="12" height="10" fill="#2b2b2b" /><path d="M3 11L13 3v8z" fill="#555" /></svg>
          <FileName>NID_kaisar (1).jpg</FileName>
          <svg width="11" height="7" viewBox="0 0 11 7" fill="none" stroke="#6a6a68" strokeWidth="1.600"><path d="M1 6l4.500-4.500L10 6" /></svg>
          <ShelfSep />
          <ShowAll>Show all</ShowAll>
          <Cross size={11} w={1.5} color="#6a6a68" />
        </Shelf>
      </Browser>
    </Desktop>
  );
}
